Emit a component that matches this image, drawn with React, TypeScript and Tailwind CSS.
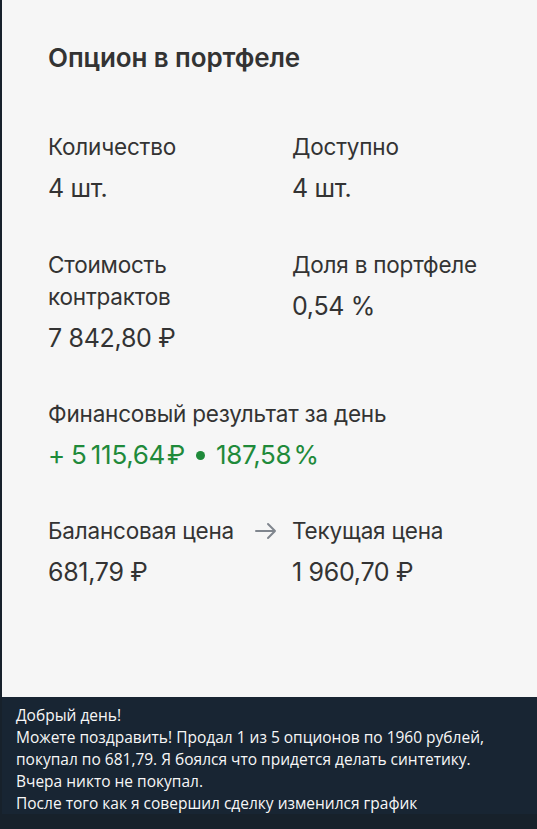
import React from "react";

function Field({ label, value, green }: { label: React.ReactNode; value: React.ReactNode; green?: boolean }) {
  return (
    <div className="flex flex-col">
      <div className="text-[22.5px] leading-[32px] text-[#333333] tracking-[-0.2px]">{label}</div>
      <div className={"mt-[9px] leading-[32px] " + (green ? "text-[26px] tracking-[-0.3px] text-[#1f8a3a]" : "text-[25px] tracking-[-0.3px] text-[#333333]")}>{value}</div>
    </div>
  );
}

export default function App() {
  return (
    <div className="w-[537px] h-[829px] bg-[#17212b] flex flex-col overflow-hidden" style={{ fontFamily: "Inter, 'Noto Sans', sans-serif" }}>
      <div className="ml-[2px] h-[697px] bg-[#f6f6f6] pl-[46px] pt-[42px] flex flex-col">
        <div className="text-[26px] leading-[32px] font-semibold text-[#333333] tracking-[-0.1px]">Опцион в портфеле</div>
        <div className="mt-[57px] grid grid-cols-[244px_1fr] gap-y-[45px]">
          <Field label="Количество" value="4 шт." />
          <Field label="Доступно" value="4 шт." />
          <Field label={<>Стоимость<br />контрактов</>} value={"7 842,80 ₽"} />
          <Field label="Доля в портфеле" value={"0,54 %"} />
          <div className="col-span-2 -mt-[1px]">
            <Field
              label="Финансовый результат за день"
              value={
                <span className="flex items-center">
                  <span>+</span>
                  <span className="ml-[6px]">5&#8201;115,64&#8202;₽</span>
                  <span className="mx-[11px] inline-block w-[9px] h-[9px] rounded-full bg-[#1f8a3a]" />
                  <span>187,58&#8202;%</span>
                </span>
              }
              green
            />
          </div>
          <div className="relative -mt-[1px]">
            <Field label="Балансовая цена" value="681,79 ₽" />
            <svg className="absolute left-[206px] top-[6px]" width="24" height="20" viewBox="0 0 24 20" fill="none" stroke="#80868e" strokeWidth="2" strokeLinecap="round" strokeLinejoin="round">
              <path d="M2 10h19M14 3l7 7-7 7" />
            </svg>
          </div>
          <div className="-mt-[1px]">
            <Field label="Текущая цена" value={"1 960,70 ₽"} />
          </div>
        </div>
      </div>
      <div className="ml-[2px] bg-[#182533] pl-[14px] pt-[7px] h-[117px] text-[15.5px] leading-[22px] text-[#f7f7f7]" style={{ fontFamily: "'Open Sans', sans-serif" }}>
        <div>Добрый день!</div>
        <div>Можете поздравить! Продал 1 из 5 опционов по 1960 рублей,</div>
        <div>покупал по 681,79. Я боялся что придется делать синтетику.</div>
        <div>Вчера никто не покупал.</div>
        <div>После того как я совершил сделку изменился график</div>
      </div>
    </div>
  );
}
